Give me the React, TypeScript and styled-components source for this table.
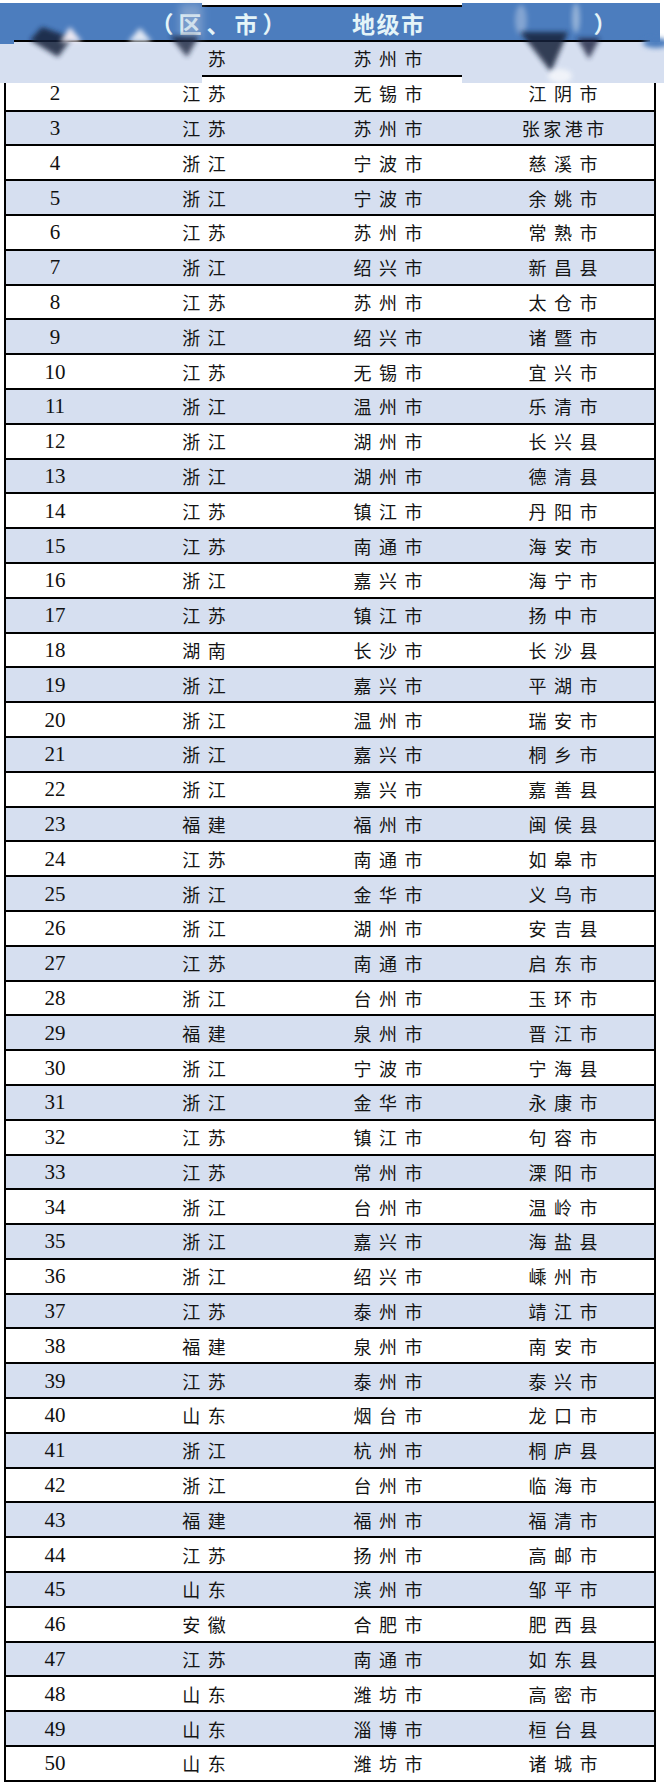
import React from "react";
import styled, { createGlobalStyle } from "styled-components";

const GlobalStyle = createGlobalStyle`
  html, body { margin: 0; padding: 0; background: #ffffff; }
  body { font-family: "Liberation Serif", "Noto Sans CJK SC", serif; }
`;

const BLUE = "#4c7dbe";
const LIGHT = "#d6dff0";

const Page = styled.div`
  position: relative;
  width: 664px;
  height: 1787px;
  padding-top: 5px;
  box-sizing: border-box;
  overflow: hidden;
`;

const Table = styled.div`
  margin-left: 4px;
  width: 652px;
  border: 2px solid #000;
  box-sizing: border-box;
`;

const cols = "98px 200px 168px 182px";

const HeaderRow = styled.div`
  display: grid;
  grid-template-columns: ${cols};
  align-items: center;
  height: 35px;
  box-sizing: border-box;
  border-bottom: 2px solid #000;
  background: ${BLUE};
  color: #e4f4f8;
  font-family: "Noto Sans CJK SC", sans-serif;
  font-weight: 700;
  font-size: 23px;
`;

const HeadCell = styled.div`
  display: flex;
  justify-content: center;
  white-space: nowrap;
  line-height: 33px;
`;

const HeadGlyph = styled.span<{ $pitch: number; $hidden?: boolean }>`
  display: inline-block;
  width: ${(p) => p.$pitch}px;
  text-align: center;
  visibility: ${(p) => (p.$hidden ? "hidden" : "visible")};
`;

const Row = styled.div<{ $shaded: boolean }>`
  display: grid;
  grid-template-columns: ${cols};
  align-items: center;
  height: 34.8px;
  box-sizing: border-box;
  border-bottom: 2px solid #000;
  background: ${(p) => (p.$shaded ? LIGHT : "#ffffff")};
  color: #141414;
  text-align: center;
  &:last-child {
    border-bottom: none;
    height: 32.8px;
  }
`;

const NumCell = styled.div`
  font-family: "Liberation Serif", serif;
  font-size: 21px;
  line-height: 1;
  padding-top: 1px;
  color: #111;
`;

const TextCell = styled.div`
  font-family: "Noto Sans CJK SC", sans-serif;
  font-weight: 400;
  font-size: 18px;
  line-height: 1;
  white-space: nowrap;
`;

const Spaced = styled.span<{ $gap: number }>`
  letter-spacing: ${(p) => p.$gap}px;
  margin-right: ${(p) => -p.$gap}px;
`;

const Veiled = styled.span`
  visibility: hidden;
`;

const Artifacts = styled.svg`
  position: absolute;
  left: 0;
  top: 0;
  pointer-events: none;
`;

type R = [string, string, string];
const data: R[] = [
  ["江苏", "苏州市", "昆山市"],
  ["江苏", "无锡市", "江阴市"],
  ["江苏", "苏州市", "张家港市"],
  ["浙江", "宁波市", "慈溪市"],
  ["浙江", "宁波市", "余姚市"],
  ["江苏", "苏州市", "常熟市"],
  ["浙江", "绍兴市", "新昌县"],
  ["江苏", "苏州市", "太仓市"],
  ["浙江", "绍兴市", "诸暨市"],
  ["江苏", "无锡市", "宜兴市"],
  ["浙江", "温州市", "乐清市"],
  ["浙江", "湖州市", "长兴县"],
  ["浙江", "湖州市", "德清县"],
  ["江苏", "镇江市", "丹阳市"],
  ["江苏", "南通市", "海安市"],
  ["浙江", "嘉兴市", "海宁市"],
  ["江苏", "镇江市", "扬中市"],
  ["湖南", "长沙市", "长沙县"],
  ["浙江", "嘉兴市", "平湖市"],
  ["浙江", "温州市", "瑞安市"],
  ["浙江", "嘉兴市", "桐乡市"],
  ["浙江", "嘉兴市", "嘉善县"],
  ["福建", "福州市", "闽侯县"],
  ["江苏", "南通市", "如皋市"],
  ["浙江", "金华市", "义乌市"],
  ["浙江", "湖州市", "安吉县"],
  ["江苏", "南通市", "启东市"],
  ["浙江", "台州市", "玉环市"],
  ["福建", "泉州市", "晋江市"],
  ["浙江", "宁波市", "宁海县"],
  ["浙江", "金华市", "永康市"],
  ["江苏", "镇江市", "句容市"],
  ["江苏", "常州市", "溧阳市"],
  ["浙江", "台州市", "温岭市"],
  ["浙江", "嘉兴市", "海盐县"],
  ["浙江", "绍兴市", "嵊州市"],
  ["江苏", "泰州市", "靖江市"],
  ["福建", "泉州市", "南安市"],
  ["江苏", "泰州市", "泰兴市"],
  ["山东", "烟台市", "龙口市"],
  ["浙江", "杭州市", "桐庐县"],
  ["浙江", "台州市", "临海市"],
  ["福建", "福州市", "福清市"],
  ["江苏", "扬州市", "高邮市"],
  ["山东", "滨州市", "邹平市"],
  ["安徽", "合肥市", "肥西县"],
  ["江苏", "南通市", "如东县"],
  ["山东", "潍坊市", "高密市"],
  ["山东", "淄博市", "桓台县"],
  ["山东", "潍坊市", "诸城市"],
];

const gapFor = (s: string) => (s.length >= 4 ? 3.5 : 7.5);

const Words: React.FC<{ text: string }> = ({ text }) => (
  <Spaced $gap={gapFor(text)}>{text}</Spaced>
);

/** Header label drawn glyph by glyph; the first `veiled` glyphs are covered in the source image. */
const HeadLabel: React.FC<{ text: string; pitch: number; veiled?: number }> = ({
  text,
  pitch,
  veiled = 0,
}) => (
  <HeadCell>
    {Array.from(text).map((ch, i) => (
      <HeadGlyph key={i} $pitch={pitch} $hidden={i < veiled}>
        {ch}
      </HeadGlyph>
    ))}
  </HeadCell>
);

const RetouchMarks: React.FC = () => (
  <Artifacts width={664} height={92} viewBox="0 0 664 92">
    <defs>
      <filter id="soft" x="-50%" y="-50%" width="200%" height="200%">
        <feGaussianBlur stdDeviation="2.5" />
      </filter>
      <filter id="softer" x="-50%" y="-50%" width="200%" height="200%">
        <feGaussianBlur stdDeviation="4" />
      </filter>
    </defs>
    {/* left retouched area */}
    <rect x={0} y={3} width={202} height={4} fill={BLUE} />
    <rect x={0} y={3} width={14} height={41} fill={BLUE} />
    <rect x={0} y={44} width={10} height={39} fill={LIGHT} />
    <rect x={0} y={72} width={202} height={11} fill={LIGHT} />
    <rect x={180} y={4} width={22} height={36} fill="#b8c8df" opacity={0.45} filter="url(#softer)" />
    <polygon points="30,40 42,27 72,38 58,57" fill="#17203a" opacity={0.85} filter="url(#soft)" />
    <polygon points="60,42 70,27 82,42" fill="#f5eff6" opacity={0.95} filter="url(#soft)" />
    <polygon points="128,42 140,28 152,42" fill="#e9eef7" opacity={0.95} filter="url(#soft)" />
    <polygon points="170,36 199,36 187,57" fill="#1d2540" opacity={0.8} filter="url(#soft)" />
    {/* right retouched area */}
    <rect x={462} y={3} width={198} height={4} fill={BLUE} />
    <rect x={650} y={3} width={10} height={39} fill={BLUE} />
    <rect x={650} y={42} width={14} height={41} fill={LIGHT} />
    <rect x={462} y={72} width={202} height={11} fill={LIGHT} />
    <ellipse cx={656} cy={43} rx={13} ry={5} fill={BLUE} filter="url(#soft)" />
    <ellipse cx={521} cy={20} rx={6} ry={15} fill="#c8d6ea" opacity={0.45} filter="url(#soft)" />
    <ellipse cx={576} cy={18} rx={4} ry={15} fill="#dde8f2" opacity={0.5} filter="url(#soft)" />
    <polygon points="520,32 568,32 551,72" fill="#18203a" opacity={0.85} filter="url(#soft)" />
    <polygon points="577,38 600,38 589,59" fill="#1c2440" opacity={0.8} filter="url(#soft)" />
    <ellipse cx={560} cy={76} rx={12} ry={7} fill="#f5f7fb" opacity={0.85} filter="url(#soft)" />
  </Artifacts>
);

export default function App() {
  return (
    <>
      <GlobalStyle />
      <Page>
        <Table>
          <HeaderRow>
            <HeadLabel text="序号" pitch={25} veiled={2} />
            <HeadLabel text="省（区、市）" pitch={28} veiled={1} />
            <HeadLabel text="地级市" pitch={24.5} />
            <HeadLabel text="县（市）" pitch={28} veiled={3} />
          </HeaderRow>
          {data.map(([prov, city, county], i) => {
            const n = i + 1;
            const first = n === 1;
            return (
              <Row key={n} $shaded={n % 2 === 1}>
                <NumCell>{first ? <Veiled>1</Veiled> : n}</NumCell>
                <TextCell>
                  {first ? (
                    <Spaced $gap={7.5}>
                      <Veiled>江</Veiled>苏
                    </Spaced>
                  ) : (
                    <Words text={prov} />
                  )}
                </TextCell>
                <TextCell>
                  <Words text={city} />
                </TextCell>
                <TextCell>
                  {first ? (
                    <Veiled>
                      <Words text={county} />
                    </Veiled>
                  ) : (
                    <Words text={county} />
                  )}
                </TextCell>
              </Row>
            );
          })}
        </Table>
        <RetouchMarks />
      </Page>
    </>
  );
}
